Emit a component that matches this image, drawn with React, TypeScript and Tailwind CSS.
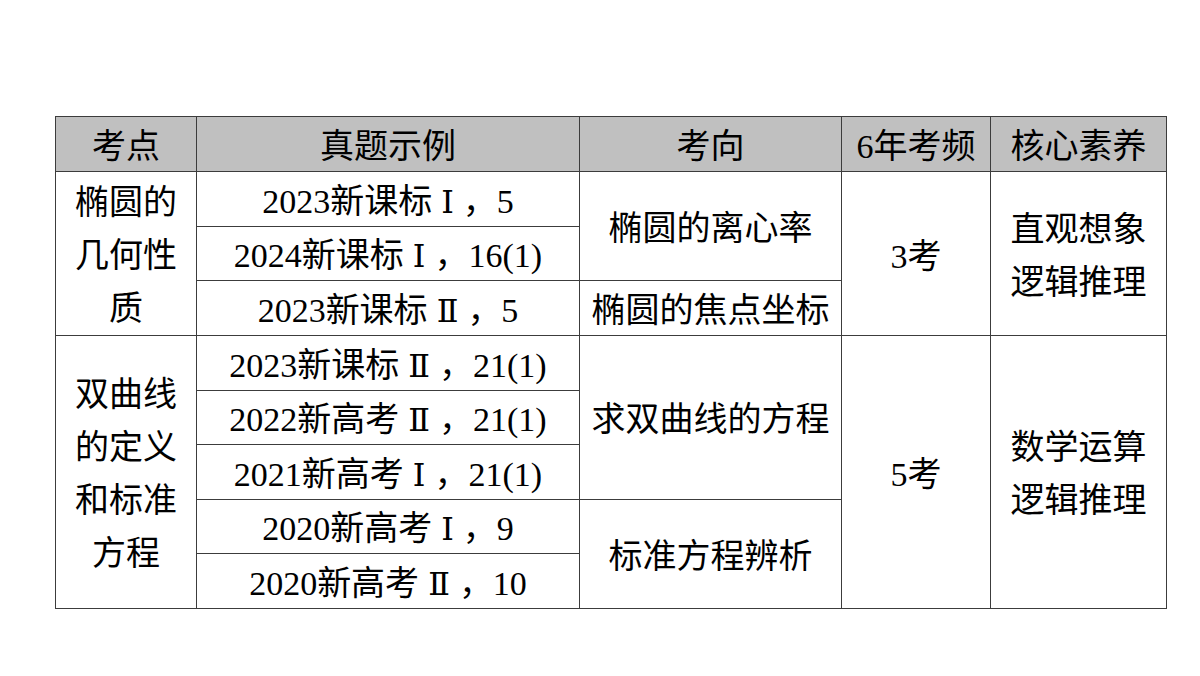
import React from "react";

const cell = "border border-[#3c3c3c] text-center align-middle p-0 pt-[6px]";
const multi = "border border-[#3c3c3c] text-center align-middle p-0 pt-[4px] leading-[53px]";

function Num({ n }: { n: string }) {
  // 罗马数字用衬线体
  return <span className="font-['DejaVu_Serif'] text-[32px] mx-[9px]">{n}</span>;
}

export default function App() {
  return (
    <main
      className="w-[1200px] h-[676px] bg-white pt-[116px] pl-[55px] text-black"
      style={{ fontFamily: '"Liberation Serif", "Noto Sans CJK SC", serif' }}
    >
      <table className="table-fixed border-collapse text-[34px] leading-[40px]">
        <colgroup>
          <col className="w-[141px]" />
          <col className="w-[383px]" />
          <col className="w-[262px]" />
          <col className="w-[149px]" />
          <col className="w-[176px]" />
        </colgroup>
        <thead>
          {/* 表头 */}
          <tr className="h-[55px] bg-[#c0c0c0]">
            <th className={`${cell} font-normal`}>考点</th>
            <th className={`${cell} font-normal`}>真题示例</th>
            <th className={`${cell} font-normal`}>考向</th>
            <th className={`${cell} font-normal whitespace-nowrap`}>6年考频</th>
            <th className={`${cell} font-normal`}>核心素养</th>
          </tr>
        </thead>
        <tbody>
          {/* 椭圆 */}
          <tr className="h-[54.5px]">
            <td rowSpan={3} className={multi}>
              椭圆的
              <br />
              几何性
              <br />质
            </td>
            <td className={cell}>
              2023新课标<Num n="Ⅰ" />，5
            </td>
            <td rowSpan={2} className={cell}>椭圆的离心率</td>
            <td rowSpan={3} className={cell}>3考</td>
            <td rowSpan={3} className={multi}>
              直观想象
              <br />
              逻辑推理
            </td>
          </tr>
          <tr className="h-[54.5px]">
            <td className={cell}>
              2024新课标<Num n="Ⅰ" />，16(1)
            </td>
          </tr>
          <tr className="h-[54.5px]">
            <td className={cell}>
              2023新课标<Num n="Ⅱ" />，5
            </td>
            <td className={`${cell} whitespace-nowrap`}>椭圆的焦点坐标</td>
          </tr>

          {/* 双曲线 */}
          <tr className="h-[54.5px]">
            <td rowSpan={5} className={multi}>
              双曲线
              <br />
              的定义
              <br />
              和标准
              <br />
              方程
            </td>
            <td className={cell}>
              2023新课标<Num n="Ⅱ" />，21(1)
            </td>
            <td rowSpan={3} className={`${cell} whitespace-nowrap`}>求双曲线的方程</td>
            <td rowSpan={5} className={cell}>5考</td>
            <td rowSpan={5} className={multi}>
              数学运算
              <br />
              逻辑推理
            </td>
          </tr>
          <tr className="h-[54.5px]">
            <td className={cell}>
              2022新高考<Num n="Ⅱ" />，21(1)
            </td>
          </tr>
          <tr className="h-[54.5px]">
            <td className={cell}>
              2021新高考<Num n="Ⅰ" />，21(1)
            </td>
          </tr>
          <tr className="h-[54.5px]">
            <td className={cell}>
              2020新高考<Num n="Ⅰ" />，9
            </td>
            <td rowSpan={2} className={cell}>标准方程辨析</td>
          </tr>
          <tr className="h-[54.5px]">
            <td className={cell}>
              2020新高考<Num n="Ⅱ" />，10
            </td>
          </tr>
        </tbody>
      </table>
    </main>
  );
}
